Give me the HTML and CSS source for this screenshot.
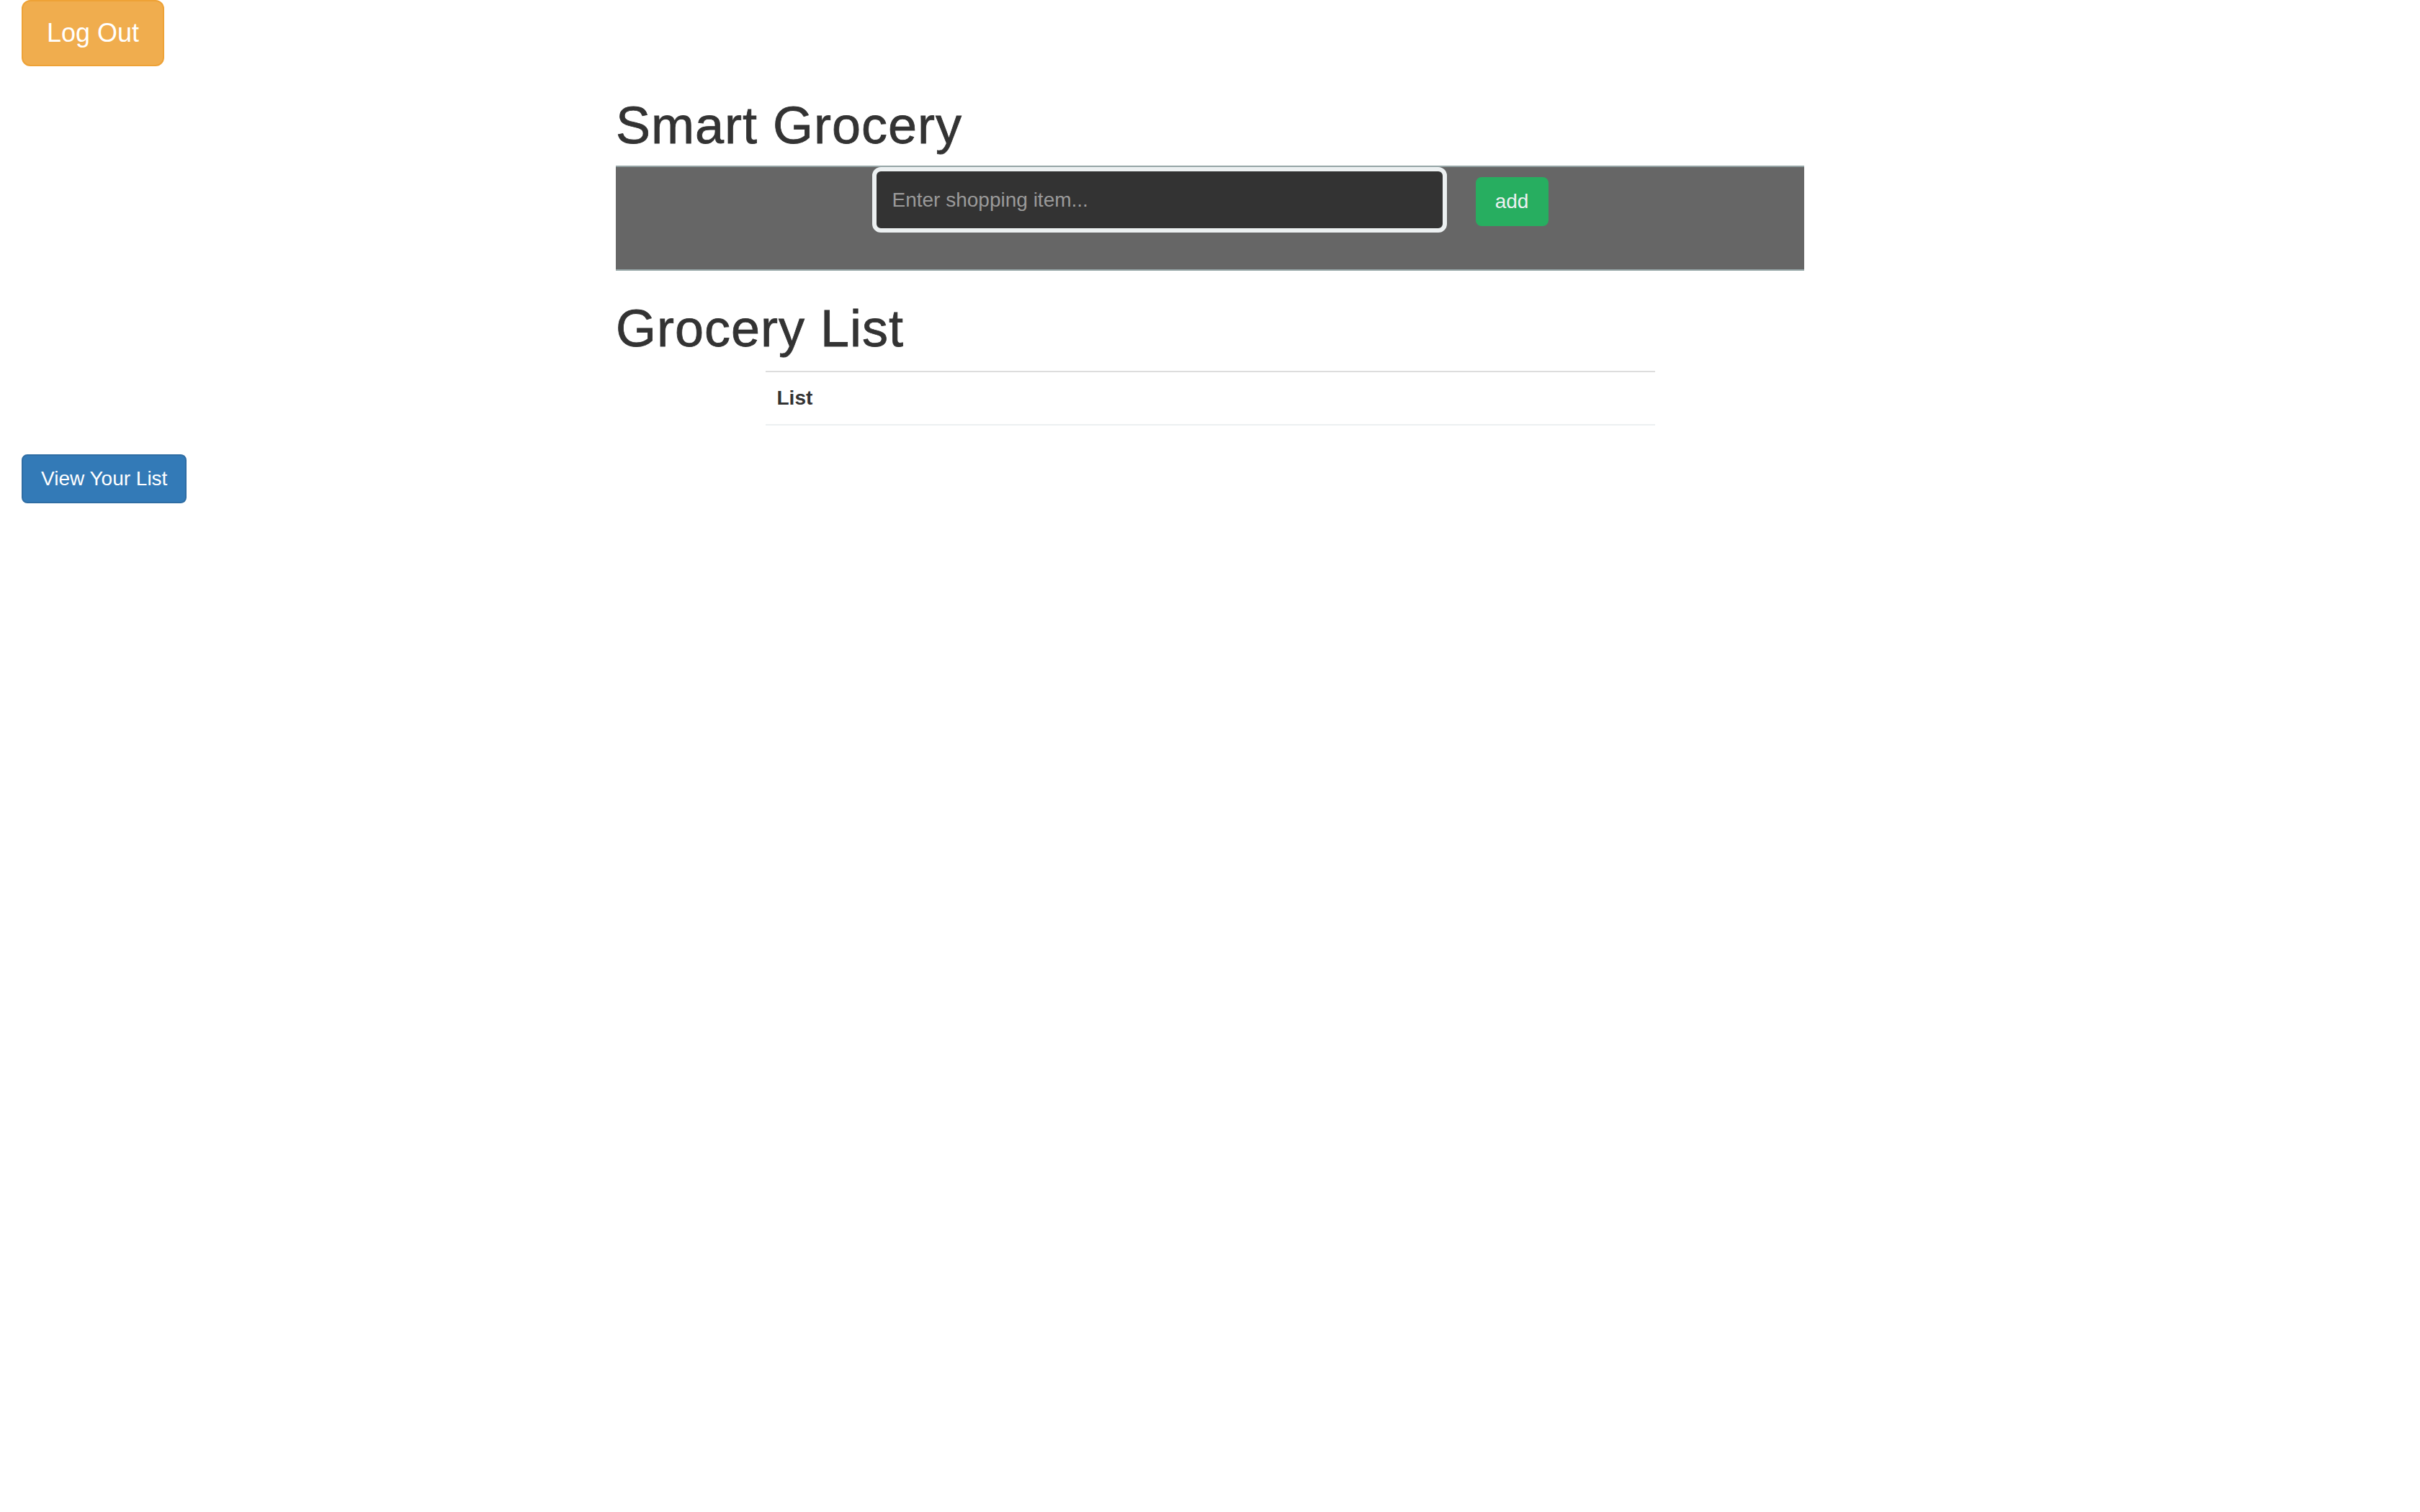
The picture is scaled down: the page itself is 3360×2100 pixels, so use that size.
FILE: index.html
```html
<!DOCTYPE html>
<html lang="en">
<head>
<meta charset="utf-8">
<title>Smart Grocery</title>
<link rel="stylesheet" href="styles.css">
</head>
<body>
<div class="topbar">
  <button class="btn btn-warning btn-lg" type="button">Log Out</button>
</div>
<div class="main">
  <h1 class="title">Smart Grocery</h1>
  <div class="entry-bar">
    <input class="item-input" type="text" placeholder="Enter shopping item...">
    <button class="btn btn-add" type="button">add</button>
  </div>
  <h1 class="list-title">Grocery List</h1>
  <table class="list-table">
    <thead>
      <tr><th>List</th></tr>
    </thead>
  </table>
</div>
<div class="bottombar">
  <button class="btn btn-primary" type="button">View Your List</button>
</div>
</body>
</html>
```

FILE: styles.css
```css
html, body {
  margin: 0;
  padding: 0;
  background: #fff;
}
body {
  font-family: "Liberation Sans", Arial, Helvetica, sans-serif;
  font-size: 28px;
  line-height: 40px;
  color: #333;
}
.btn {
  font-family: inherit;
  display: inline-block;
  border: 2px solid transparent;
  cursor: pointer;
  margin: 0;
}
.topbar {
  padding: 0 30px;
  height: 92px;
}
.btn-warning {
  background: #f0ad4e;
  border-color: #eea236;
  color: #fff;
}
.btn-lg {
  font-size: 36px;
  line-height: 48px;
  padding: 20px 33px;
  border-radius: 12px;
}
.main {
  width: 1650px;
  margin: 0 auto;
}
.title,
.list-title {
  font-size: 72px;
  line-height: 79px;
  font-weight: 500;
  color: #333;
  letter-spacing: 1px;
  -webkit-text-stroke: 0.8px #333;
}
.title {
  margin: 43px 0 16px;
}
.list-title {
  margin: 41px 0 19px;
}
.entry-bar {
  background: #666;
  border-top: 2px solid #95a5a6;
  border-bottom: 2px solid #95a5a6;
  height: 142px;
  display: flex;
  justify-content: center;
  align-items: flex-start;
  gap: 40px;
}
.item-input {
  box-sizing: border-box;
  width: 798px;
  height: 91px;
  margin: 0;
  border: 6px solid #ecf0f1;
  border-radius: 12px;
  background: #333;
  color: #fff;
  font-family: inherit;
  font-size: 28px;
  padding: 0 22px;
  outline: none;
}
.item-input::placeholder {
  color: #9a9a9a;
  opacity: 1;
}
.btn-add {
  box-sizing: border-box;
  margin-top: 14px;
  height: 68px;
  width: 101px;
  padding: 0;
  font-size: 28px;
  line-height: 64px;
  background: #27ae60;
  border-color: #27ae60;
  border-radius: 8px;
  color: #ecf0f1;
}
.list-table {
  width: 1235px;
  margin: 0 auto 40px;
  border-collapse: collapse;
  border-spacing: 0;
}
.list-table th {
  text-align: left;
  font-weight: bold;
  font-size: 28px;
  line-height: 40px;
  padding: 16px;
  border-top: 2px solid #ddd;
  border-bottom: 2px solid #ecf0f1;
}
.bottombar {
  padding: 0 30px;
}
.btn-primary {
  box-sizing: border-box;
  height: 68px;
  font-size: 28px;
  line-height: 40px;
  padding: 12px 25px;
  border-radius: 8px;
  background: #337ab7;
  border-color: #2e6da4;
  color: #fff;
}
```
